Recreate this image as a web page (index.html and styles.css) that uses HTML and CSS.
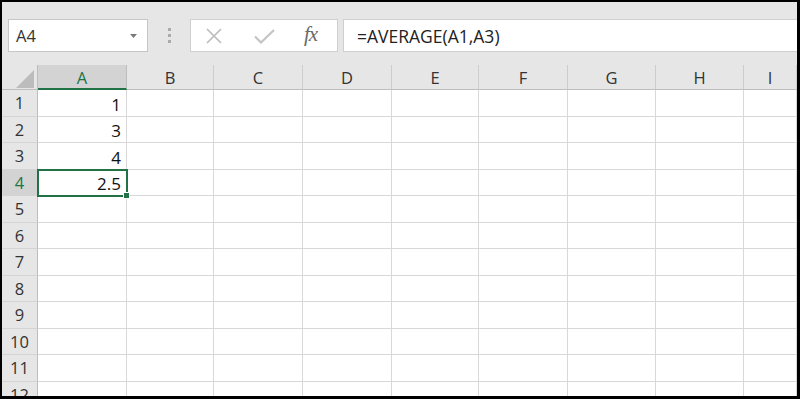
FILE: index.html
```html
<!DOCTYPE html>
<html lang="en">
<head>
  <meta charset="UTF-8"/>
  <meta name="viewport" content="width=device-width,initial-scale=1.0"/>
  <title>AVERAGE</title>
  <link rel="stylesheet" href="styles.css">
</head>
<body>
  <div class="frame">
    <div class="toolbar">
      <div class="namebox">
        <span>A4</span>
        <svg class="caret" width="7" height="4" viewBox="0 0 7 4"><path d="M0 0h7L3.5 4z"/></svg>
      </div>
      <div class="grip"><i></i><i></i><i></i></div>
      <div class="fbuttons">
        <svg class="ico-x" width="18" height="16" viewBox="0 0 18 16"><path d="M2 1L16 15M16 1L2 15"/></svg>
        <svg class="ico-ok" width="21" height="15" viewBox="0 0 21 15"><path d="M1 7.5L7 13.5L20 1"/></svg>
        <span class="fx">fx</span>
      </div>
      <div class="formula">=AVERAGE(A1,A3)</div>
    </div>

    <div class="sheet">
      <div class="corner"><span></span></div>
      <div class="ch on">A</div><div class="ch">B</div><div class="ch">C</div><div class="ch">D</div><div class="ch">E</div><div class="ch">F</div><div class="ch">G</div><div class="ch">H</div><div class="ch">I</div>

      <div class="rh">1</div><div class="c">1</div><div class="c"></div><div class="c"></div><div class="c"></div><div class="c"></div><div class="c"></div><div class="c"></div><div class="c"></div><div class="c"></div>
      <div class="rh">2</div><div class="c">3</div><div class="c"></div><div class="c"></div><div class="c"></div><div class="c"></div><div class="c"></div><div class="c"></div><div class="c"></div><div class="c"></div>
      <div class="rh">3</div><div class="c">4</div><div class="c"></div><div class="c"></div><div class="c"></div><div class="c"></div><div class="c"></div><div class="c"></div><div class="c"></div><div class="c"></div>
      <div class="rh on">4</div><div class="c sel">2.5</div><div class="c"></div><div class="c"></div><div class="c"></div><div class="c"></div><div class="c"></div><div class="c"></div><div class="c"></div><div class="c"></div>
      <div class="rh">5</div><div class="c"></div><div class="c"></div><div class="c"></div><div class="c"></div><div class="c"></div><div class="c"></div><div class="c"></div><div class="c"></div><div class="c"></div>
      <div class="rh">6</div><div class="c"></div><div class="c"></div><div class="c"></div><div class="c"></div><div class="c"></div><div class="c"></div><div class="c"></div><div class="c"></div><div class="c"></div>
      <div class="rh">7</div><div class="c"></div><div class="c"></div><div class="c"></div><div class="c"></div><div class="c"></div><div class="c"></div><div class="c"></div><div class="c"></div><div class="c"></div>
      <div class="rh">8</div><div class="c"></div><div class="c"></div><div class="c"></div><div class="c"></div><div class="c"></div><div class="c"></div><div class="c"></div><div class="c"></div><div class="c"></div>
      <div class="rh">9</div><div class="c"></div><div class="c"></div><div class="c"></div><div class="c"></div><div class="c"></div><div class="c"></div><div class="c"></div><div class="c"></div><div class="c"></div>
      <div class="rh">10</div><div class="c"></div><div class="c"></div><div class="c"></div><div class="c"></div><div class="c"></div><div class="c"></div><div class="c"></div><div class="c"></div><div class="c"></div>
      <div class="rh">11</div><div class="c"></div><div class="c"></div><div class="c"></div><div class="c"></div><div class="c"></div><div class="c"></div><div class="c"></div><div class="c"></div><div class="c"></div>
      <div class="rh">12</div><div class="c"></div><div class="c"></div><div class="c"></div><div class="c"></div><div class="c"></div><div class="c"></div><div class="c"></div><div class="c"></div><div class="c"></div>
    </div>
  </div>
</body>
</html>
```

FILE: styles.css
```css
html, body { margin:0; padding:0; background:#fff; }
body { font-family:'Open Sans', 'Liberation Sans', sans-serif; }
.frame { width:800px; height:399px; box-sizing:border-box; border:solid #000; border-width:2px 3px 3px 2px; background:#e6e6e6; display:flex; flex-direction:column; overflow:hidden; }

/* formula bar */
.toolbar { height:63px; flex:none; box-sizing:border-box; padding:17px 0 0 6px; display:flex; align-items:flex-start; }
.namebox { width:140px; height:33px; box-sizing:border-box; background:#fff; border:1px solid #c6c6c6; display:flex; align-items:center; justify-content:space-between; padding:0 10px 0 7px; font-size:16.5px; color:#333; }
.caret { fill:#7a7a7a; margin-top:1px; }
.grip { width:42px; height:33px; display:flex; flex-direction:column; align-items:center; justify-content:center; gap:3px; }
.grip i { display:block; width:3px; height:3px; background:#ababab; }
.fbuttons { width:148px; height:33px; box-sizing:border-box; background:#fff; border:1px solid #cfcfcf; display:flex; align-items:center; padding-left:14px; }
.ico-x { stroke:#bdbdbd; stroke-width:1.7; fill:none; }
.ico-ok { stroke:#c4c4c4; stroke-width:2.2; fill:none; margin-left:31px; margin-top:1px; }
.fx { font-family:'Liberation Serif', serif; font-style:italic; font-size:21px; color:#6a6a6a; margin-left:29px; margin-top:-3px; letter-spacing:-1px; }
.formula { flex:1; height:33px; box-sizing:border-box; margin-left:5px; background:#fff; border:1px solid #cfcfcf; border-right:none; display:flex; align-items:center; padding-left:13px; font-size:17.5px; color:#222; }

/* grid */
.sheet { flex:1; display:grid; grid-template-columns:36px 89px 87px 89px 89px 87px 89px 88px 88px 1fr; grid-template-rows:25px repeat(12, 26.5px); background:#fff; overflow:hidden; }
.corner { background:#e6e6e6; border-right:1px solid #bdbdbd; border-bottom:1px solid #bdbdbd; display:flex; justify-content:flex-end; align-items:flex-end; padding:0 3px 1px 0; }
.corner span { width:0; height:0; border-left:18px solid transparent; border-bottom:18px solid #bcbcbc; }
.ch { background:#e6e6e6; border-right:1px solid #cdcdcd; border-bottom:1px solid #bdbdbd; display:flex; align-items:center; justify-content:center; font-size:16.5px; color:#333; padding-top:1px; }
.ch.on { background:#d3d3d3; color:#217346; border-bottom:2px solid #217346; border-right-color:#bdbdbd; }
.rh { background:#e6e6e6; border-right:1px solid #bdbdbd; border-bottom:1px solid #d4d4d4; display:flex; align-items:center; justify-content:center; font-size:16.5px; color:#333; }
.rh.on { background:#d3d3d3; color:#217346; }
.c { border-right:1px solid #d8d8d8; border-bottom:1px solid #d8d8d8; display:flex; align-items:center; justify-content:flex-end; padding:3px 5px 0 0; font-size:17px; color:#111; }
.c.sel { position:relative; z-index:1; outline:2px solid #217346; outline-offset:-1px; }
.c.sel::after { content:""; position:absolute; right:-4px; bottom:-4px; width:5px; height:5px; background:#217346; border:1px solid #fff; }
```
